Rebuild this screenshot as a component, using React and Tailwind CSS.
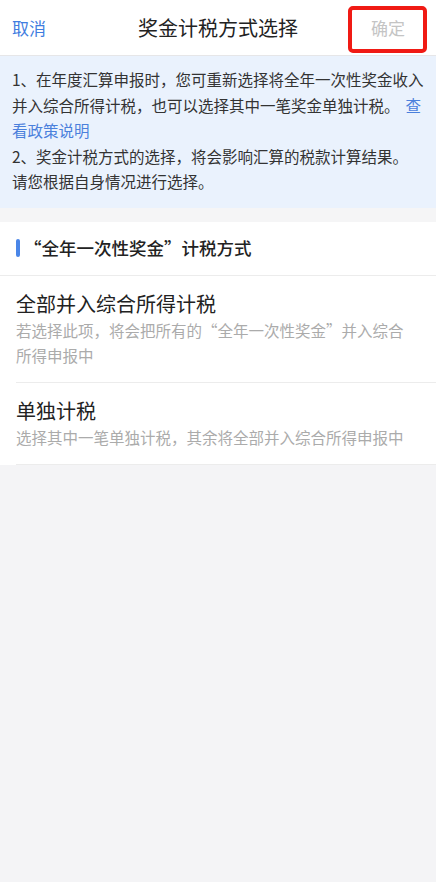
export default function App() {
  return (
    <div className="min-h-[882px] w-[436px] bg-[#f4f4f6] font-['Noto_Sans_CJK_SC',sans-serif]">
      {/* Header */}
      <div className="relative grid h-[56px] grid-cols-[1fr_auto_1fr] items-center border-b border-[#e6e6e8] bg-white">
        <div className="pl-3 text-[17px] text-[#3f7de0]">取消</div>
        <div className="text-[20px] text-[#222]">奖金计税方式选择</div>
        <div className="justify-self-end pr-[31px] text-[17px] text-[#c4c4c4]">确定</div>
        <div className="absolute right-[9px] top-[6px] h-[47px] w-[79px] rounded-[5px] border-4 border-[#f01a14]" />
      </div>

      {/* Info */}
      <div className="bg-[#eaf2fd] px-3 pb-[13px] pt-[11px] text-[15.5px] leading-[25.5px] text-[#333] whitespace-nowrap">
        <div>1、在年度汇算申报时，您可重新选择将全年一次性奖金收入</div>
        <div>
          并入综合所得计税，也可以选择其中一笔奖金单独计税。
          <span className="ml-[6px] text-[#4a80dc]">查</span>
        </div>
        <div className="text-[#4a80dc]">看政策说明</div>
        <div>2、奖金计税方式的选择，将会影响汇算的税款计算结果。</div>
        <div>请您根据自身情况进行选择。</div>
      </div>

      <div className="h-[14px] bg-[#f5f5f6]" />

      {/* Section */}
      <div className="bg-white">
        <div className="flex h-[54px] items-center border-b border-[#ececec] pl-4">
          <div className="h-[18px] w-[4px] rounded-full bg-[#4a86e8]" />
          <div className="ml-[4px] text-[17.5px] font-medium text-[#222]">“全年一次性奖金”计税方式</div>
        </div>

        <div className="ml-4 border-b border-[#ececec] py-[14px] pr-4">
          <div className="text-[20px] leading-[28px] text-[#222]">全部并入综合所得计税</div>
          <div className="text-[15.5px] leading-[25px] text-[#ababab] whitespace-nowrap">
            若选择此项，将会把所有的“全年一次性奖金”并入综合
            <br />
            所得申报中
          </div>
        </div>

        <div className="ml-4 border-b border-[#ececec] py-[14px] pr-4">
          <div className="text-[20px] leading-[28px] text-[#222]">单独计税</div>
          <div className="text-[15.5px] leading-[25px] text-[#ababab] whitespace-nowrap">
            选择其中一笔单独计税，其余将全部并入综合所得申报中
          </div>
        </div>
      </div>
    </div>
  );
}
